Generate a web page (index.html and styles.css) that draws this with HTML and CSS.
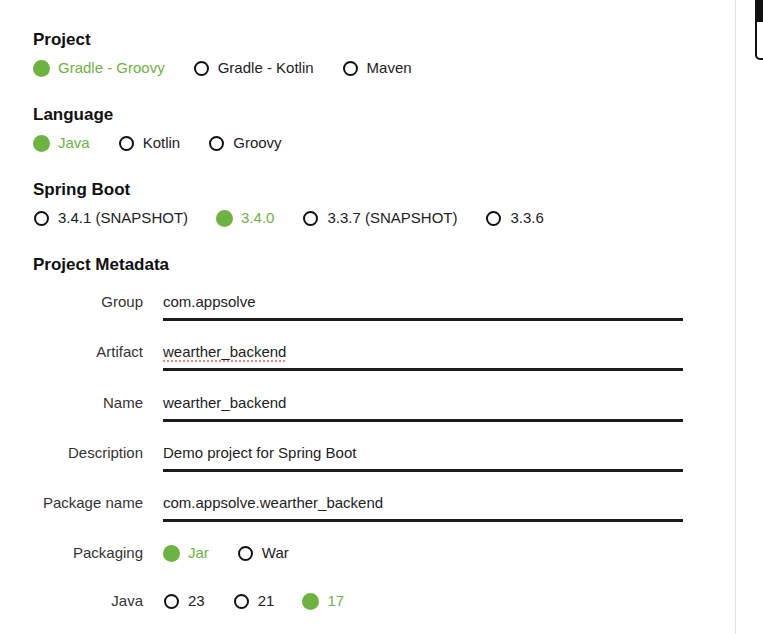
FILE: index.html
```html
<!DOCTYPE html>
<html lang="en">
  <head>
    <meta charset="UTF-8" />
    <meta name="viewport" content="width=device-width, initial-scale=1.0" />
    <title>Spring Initializr</title>
    <link rel="stylesheet" href="styles.css">
  </head>
  <body>
    <div class="page">
      <main class="main">
        <section class="group">
          <div class="group-title">Project</div>
          <div class="options">
            <div class="option checked"><span class="radio"></span>Gradle - Groovy</div>
            <div class="option"><span class="radio"></span>Gradle - Kotlin</div>
            <div class="option"><span class="radio"></span>Maven</div>
          </div>
        </section>

        <section class="group">
          <div class="group-title">Language</div>
          <div class="options">
            <div class="option checked"><span class="radio"></span>Java</div>
            <div class="option"><span class="radio"></span>Kotlin</div>
            <div class="option"><span class="radio"></span>Groovy</div>
          </div>
        </section>

        <section class="group">
          <div class="group-title">Spring Boot</div>
          <div class="options">
            <div class="option"><span class="radio"></span>3.4.1 (SNAPSHOT)</div>
            <div class="option checked"><span class="radio"></span>3.4.0</div>
            <div class="option"><span class="radio"></span>3.3.7 (SNAPSHOT)</div>
            <div class="option"><span class="radio"></span>3.3.6</div>
          </div>
        </section>

        <section class="group meta">
          <div class="group-title">Project Metadata</div>
          <div class="field">
            <div class="label">Group</div>
            <div class="input">com.appsolve</div>
          </div>
          <div class="field">
            <div class="label">Artifact</div>
            <div class="input"><span class="misspelled">wearther_backend</span></div>
          </div>
          <div class="field">
            <div class="label">Name</div>
            <div class="input">wearther_backend</div>
          </div>
          <div class="field">
            <div class="label">Description</div>
            <div class="input">Demo project for Spring Boot</div>
          </div>
          <div class="field">
            <div class="label">Package name</div>
            <div class="input">com.appsolve.wearther_backend</div>
          </div>
          <div class="field choice packaging">
            <div class="label">Packaging</div>
            <div class="options">
              <div class="option checked"><span class="radio"></span>Jar</div>
              <div class="option"><span class="radio"></span>War</div>
            </div>
          </div>
          <div class="field choice">
            <div class="label">Java</div>
            <div class="options">
              <div class="option"><span class="radio"></span>23</div>
              <div class="option"><span class="radio"></span>21</div>
              <div class="option checked"><span class="radio"></span>17</div>
            </div>
          </div>
        </section>
      </main>

      <aside class="side">
        <div class="side-card"></div>
      </aside>
    </div>
  </body>
</html>
```

FILE: styles.css
```css
body {
  margin: 0;
  padding: 0;
  background: #fff;
  font-family: "Liberation Sans", Arial, sans-serif;
  color: #222;
  overflow: hidden;
}
.page {
  display: flex;
  height: 634px;
}
.main {
  width: 736px;
  flex-shrink: 0;
  box-sizing: border-box;
  padding: 30px 0 0 33px;
  border-right: 1px solid #dce6e6;
}
.group {
  margin-bottom: 27px;
}
.group-title {
  font-size: 17px;
  font-weight: bold;
  line-height: 20px;
  color: #111;
  margin-bottom: 8px;
}
.options {
  display: flex;
  gap: 28px;
}
.option {
  display: flex;
  align-items: center;
  font-size: 15px;
  line-height: 20px;
  color: #222;
}
.radio {
  width: 15px;
  height: 15px;
  box-sizing: border-box;
  border: 2.5px solid #111;
  border-radius: 50%;
  margin: 0 9px 0 1px;
}
.option.checked {
  color: #6db33f;
}
.option.checked .radio {
  width: 17px;
  height: 17px;
  margin: 0 8px 0 0;
  border: none;
  background: #6db33f;
}

/* metadata */
.meta .group-title {
  margin-bottom: 17px;
}
.field {
  display: flex;
  align-items: flex-start;
  margin-bottom: 21.3px;
}
.label {
  width: 110px;
  margin-right: 20px;
  text-align: right;
  font-size: 15px;
  line-height: 20px;
  color: #333;
}
.input {
  width: 520px;
  font-size: 15px;
  line-height: 20px;
  color: #222;
  padding-bottom: 6px;
  border-bottom: 3px solid #1c1c1c;
}
.misspelled {
  text-decoration: underline dotted #e25a55;
  text-underline-offset: 3px;
}
.field.choice {
  margin-bottom: 28px;
}
.field.packaging {
  margin-top: 1px;
}

/* right panel, cut off by the window */
.side {
  flex: 1;
  overflow: hidden;
  padding-left: 19px;
}
.side-card {
  width: 200px;
  height: 36px;
  border: 2px solid #111;
  border-top: 22px solid #111;
  border-radius: 0 0 0 5px;
}
```
